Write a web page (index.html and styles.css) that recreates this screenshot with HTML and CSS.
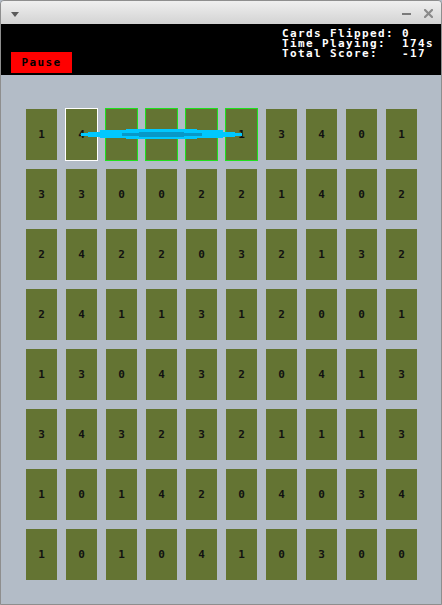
FILE: index.html
```html
<!DOCTYPE html>
<html lang="en">
<head>
    <meta charset="UTF-8">
    <meta name="viewport" content="width=device-width, initial-scale=1.0">
    <title>Memory Cards</title>
    <link rel="stylesheet" href="styles.css">
</head>
<body>
    <div class="window">
        <!-- Title bar -->
        <div class="titlebar">
            <span class="menu-arrow"></span>
            <div class="win-buttons">
                <span class="btn-min"></span>
                <svg class="btn-close" width="9" height="9" viewBox="0 0 9 9">
                    <path d="M1 1 L8 8 M8 1 L1 8" stroke="#8a8a8a" stroke-width="2.2" stroke-linecap="square"/>
                </svg>
            </div>
        </div>

        <!-- Game header -->
        <div class="header">
            <button class="pause">Pause</button>
            <div class="stats">Cards Flipped: 0
Time Playing:  174s
Total Score:   -17</div>
        </div>

        <!-- Board -->
        <div class="board">
            <div class="grid">
                <!-- row 1 -->
                <div class="card">1</div>
                <div class="card picked">4</div>
                <div class="card matched">1</div>
                <div class="card matched">0</div>
                <div class="card matched">1</div>
                <div class="card matched">1</div>
                <div class="card">3</div>
                <div class="card">4</div>
                <div class="card">0</div>
                <div class="card">1</div>
                <!-- row 2 -->
                <div class="card">3</div>
                <div class="card">3</div>
                <div class="card">0</div>
                <div class="card">0</div>
                <div class="card">2</div>
                <div class="card">2</div>
                <div class="card">1</div>
                <div class="card">4</div>
                <div class="card">0</div>
                <div class="card">2</div>
                <!-- row 3 -->
                <div class="card">2</div>
                <div class="card">4</div>
                <div class="card">2</div>
                <div class="card">2</div>
                <div class="card">0</div>
                <div class="card">3</div>
                <div class="card">2</div>
                <div class="card">1</div>
                <div class="card">3</div>
                <div class="card">2</div>
                <!-- row 4 -->
                <div class="card">2</div>
                <div class="card">4</div>
                <div class="card">1</div>
                <div class="card">1</div>
                <div class="card">3</div>
                <div class="card">1</div>
                <div class="card">2</div>
                <div class="card">0</div>
                <div class="card">0</div>
                <div class="card">1</div>
                <!-- row 5 -->
                <div class="card">1</div>
                <div class="card">3</div>
                <div class="card">0</div>
                <div class="card">4</div>
                <div class="card">3</div>
                <div class="card">2</div>
                <div class="card">0</div>
                <div class="card">4</div>
                <div class="card">1</div>
                <div class="card">3</div>
                <!-- row 6 -->
                <div class="card">3</div>
                <div class="card">4</div>
                <div class="card">3</div>
                <div class="card">2</div>
                <div class="card">3</div>
                <div class="card">2</div>
                <div class="card">1</div>
                <div class="card">1</div>
                <div class="card">1</div>
                <div class="card">3</div>
                <!-- row 7 -->
                <div class="card">1</div>
                <div class="card">0</div>
                <div class="card">1</div>
                <div class="card">4</div>
                <div class="card">2</div>
                <div class="card">0</div>
                <div class="card">4</div>
                <div class="card">0</div>
                <div class="card">3</div>
                <div class="card">4</div>
                <!-- row 8 -->
                <div class="card">1</div>
                <div class="card">0</div>
                <div class="card">1</div>
                <div class="card">0</div>
                <div class="card">4</div>
                <div class="card">1</div>
                <div class="card">0</div>
                <div class="card">3</div>
                <div class="card">0</div>
                <div class="card">0</div>
            </div>

            <!-- match streak line drawn over the first row -->
            <svg class="streak" width="260" height="80" viewBox="0 0 260 80">
                <rect x="80" y="58" width="161" height="3" fill="#00c8ff"/>
                <rect x="87" y="57" width="147" height="5" fill="#00c8ff"/>
                <rect x="99" y="55" width="123" height="8" fill="#00c8ff"/>
                <rect x="125" y="54" width="71" height="10" fill="#00c8ff"/>
                <rect x="121" y="58" width="80" height="3" fill="#0898c8"/>
                <rect x="138" y="57" width="45" height="5" fill="#0898c8"/>
            </svg>
        </div>
    </div>
</body>
</html>
```

FILE: styles.css
```css
* {
    box-sizing: border-box;
}
body {
    margin: 0;
    font-family: "DejaVu Sans Mono", "Liberation Mono", monospace;
    background-color: #b3bcc7;
}
.window {
    width: 442px;
    height: 605px;
    border: 1px solid #8e8e8e;
    border-radius: 4px 4px 0 0;
    display: flex;
    flex-direction: column;
    overflow: hidden;
}
.titlebar {
    height: 23px;
    background: linear-gradient(#efefef, #d3d3d3);
    display: flex;
    align-items: center;
    justify-content: space-between;
    padding: 0 8px 0 10px;
}
.menu-arrow {
    width: 0;
    height: 0;
    border-left: 4px solid transparent;
    border-right: 4px solid transparent;
    border-top: 5px solid #5a5a5a;
    margin-top: 3px;
}
.win-buttons {
    display: flex;
    align-items: center;
    gap: 13px;
}
.btn-min {
    width: 9px;
    height: 2px;
    background-color: #7a7a7a;
    margin-top: 3px;
}
.btn-close {
    display: block;
    margin-top: 1px;
}
.header {
    height: 51px;
    background-color: #000;
    display: flex;
    justify-content: space-between;
    padding: 5px 7px 2px 10px;
}
.pause {
    align-self: flex-end;
    width: 61px;
    height: 21px;
    border: none;
    padding: 0;
    background-color: #ff0000;
    color: #000;
    font-family: "DejaVu Sans Mono", monospace;
    font-weight: bold;
    font-size: 11px;
    letter-spacing: 1.4px;
}
.stats {
    white-space: pre;
    color: #fff;
    font-weight: bold;
    font-size: 11px;
    line-height: 10px;
    letter-spacing: 1.38px;
    width: 152px;
}
.board {
    flex: 1;
    position: relative;
    background-color: #b3bcc7;
    padding: 34px 0 0 25px;
}
.grid {
    display: grid;
    grid-template-columns: repeat(10, 31px);
    grid-auto-rows: 51px;
    gap: 9px;
}
.card {
    background-color: #647433;
    color: #111;
    font-weight: bold;
    font-size: 11px;
    display: flex;
    align-items: center;
    justify-content: center;
}
.card.picked {
    outline: 1px solid #ffffff;
}
.card.matched {
    outline: 1px solid #1fe01f;
}
.streak {
    position: absolute;
    left: 0;
    top: 0;
}
```
